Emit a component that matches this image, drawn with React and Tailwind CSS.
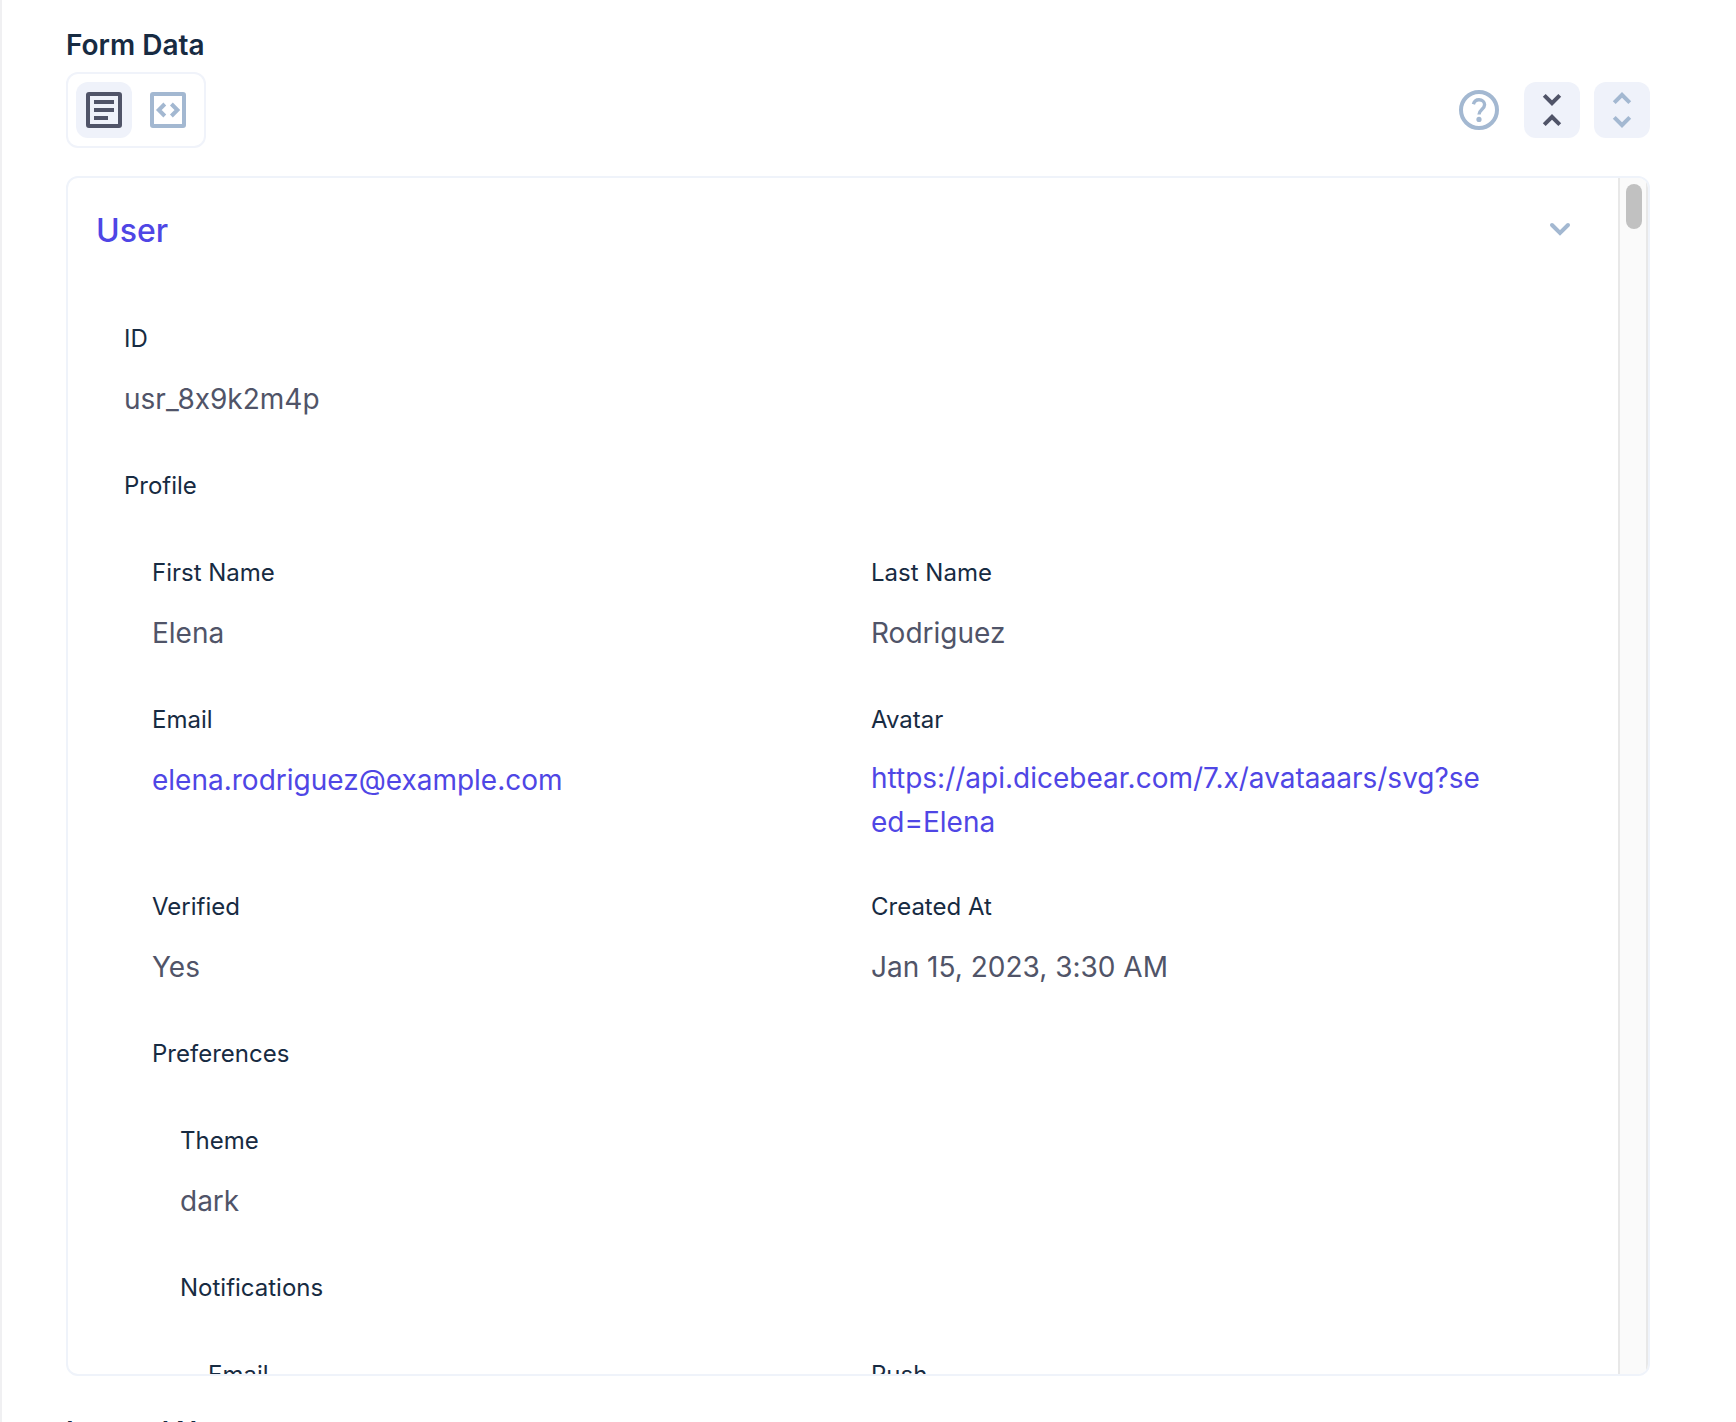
import React from "react";

const ICON = "size-12 shrink-0";

function ArticleIcon() {
  return (
    <svg viewBox="0 0 24 24" className={ICON} fill="none" stroke="currentColor" strokeWidth="2" aria-hidden="true">
      <rect x="4" y="4" width="16" height="16" rx="0.5" />
      <path d="M7 8h10M7 12h10M7 16h7" />
    </svg>
  );
}

function CodeIcon() {
  return (
    <svg viewBox="0 0 24 24" className={ICON} fill="none" stroke="currentColor" strokeWidth="2" aria-hidden="true">
      <rect x="4" y="4" width="16" height="16" rx="0.5" />
      <path d="m10.4 9-3 3 3 3M13.7 9l3 3-3 3" />
    </svg>
  );
}

function HelpIcon() {
  return (
    <svg viewBox="0 0 24 24" className={ICON} fill="none" stroke="currentColor" strokeWidth="2" aria-hidden="true">
      <circle cx="12" cy="12" r="9" />
      <path strokeWidth="1.7" d="M9.2 9.1C9.6 7.7 10.6 6.9 12 6.9c1.6 0 2.8 1 2.8 2.5 0 1.1-.7 1.8-1.5 2.5-.9.8-1.3 1.3-1.3 2.4" />
      <circle cx="12" cy="16.7" r="1.3" fill="currentColor" stroke="none" />
    </svg>
  );
}

function CollapseIcon() {
  return (
    <svg viewBox="0 0 24 24" className={ICON} fill="currentColor" aria-hidden="true">
      <path d="M7.41 18.59 8.83 20 12 16.83 15.17 20l1.41-1.41L12 14l-4.59 4.59zm9.18-13.18L15.17 4 12 7.17 8.83 4 7.41 5.41 12 10l4.59-4.59z" />
    </svg>
  );
}

function ExpandIcon() {
  return (
    <svg viewBox="0 0 24 24" className={ICON} fill="currentColor" aria-hidden="true">
      <path d="M12 5.83 15.17 9l1.41-1.41L12 3 7.41 7.59 8.83 9 12 5.83zm0 12.34L8.83 15l-1.41 1.41L12 21l4.59-4.59L15.17 15 12 18.17z" />
    </svg>
  );
}

function ChevronIcon() {
  return (
    <svg viewBox="0 0 24 24" className={ICON} fill="none" stroke="currentColor" strokeWidth="2" strokeLinecap="round" aria-hidden="true">
      <path d="m8 9 4 4 4-4" />
    </svg>
  );
}

function Field({ label, children }) {
  return (
    <div className="min-w-0">
      <dt className="text-2xl leading-8 text-[#172b42]">{label}</dt>
      <dd className="mt-5 pr-12 text-[28px] leading-[48px] text-[#505468]">{children}</dd>
    </div>
  );
}

function Group({ label, children }) {
  return (
    <div>
      <h3 className="text-2xl leading-8 text-[#172b42]">{label}</h3>
      <div className="flex flex-col gap-[47px] px-7 pt-[55px]">{children}</div>
    </div>
  );
}

function Columns({ children }) {
  return <dl className="grid grid-cols-2 gap-x-14 gap-y-[47px]">{children}</dl>;
}

export default function App() {
  return (
    <main className="h-screen overflow-hidden border-l-2 border-[#f0f0f2] bg-white pr-[86px] pl-16 font-['Inter','Open_Sans',sans-serif] [font-feature-settings:'calt'_0]">
      <section className="pt-[25px]">
        <h1 className="text-[28px] leading-10 font-semibold text-[#172b42]">Form Data</h1>
        <div className="mt-[7px] flex items-center justify-between">
          <div className="flex gap-2 rounded-xl border-2 border-[#f0f3fa] p-2">
            <button type="button" aria-label="Form view" aria-pressed="true" className="rounded-xl bg-[#eff2fa] p-1 text-[#505468]">
              <ArticleIcon />
            </button>
            <button type="button" aria-label="Code view" aria-pressed="false" className="rounded-xl p-1 text-[#a3b8d1]">
              <CodeIcon />
            </button>
          </div>
          <div className="flex items-center gap-3.5">
            <button type="button" aria-label="Help" className="mr-[7px] text-[#a3b8d1]">
              <HelpIcon />
            </button>
            <button type="button" aria-label="Collapse all" className="rounded-xl bg-[#eff2fa] p-1 text-[#505468]">
              <CollapseIcon />
            </button>
            <button type="button" aria-label="Expand all" className="rounded-xl bg-[#eff2fa] p-1 text-[#a3b8d1]">
              <ExpandIcon />
            </button>
          </div>
        </div>

        <div className="mt-7 flex h-[1200px] overflow-hidden rounded-xl border-2 border-[#eff3fa]">
          <div className="min-w-0 flex-1 overflow-hidden px-7 pt-7">
            <button type="button" aria-expanded="true" className="flex w-full items-center justify-between pr-1.5">
              <span className="text-[32px] leading-[50px] font-medium text-[#4f46e5]">User</span>
              <span className="text-[#a3b8d1]">
                <ChevronIcon />
              </span>
            </button>
            <div className="flex flex-col gap-[47px] px-7 pt-[67px]">
              <dl>
                <Field label="ID">usr_8x9k2m4p</Field>
              </dl>
              <Group label="Profile">
                <Columns>
                  <Field label="First Name">Elena</Field>
                  <Field label="Last Name">Rodriguez</Field>
                  <Field label="Email">
                    <a href="mailto:elena.rodriguez@example.com" className="text-[#4f46e5]">
                      elena.rodriguez@example.com
                    </a>
                  </Field>
                  <Field label="Avatar">
                    <a href="https://api.dicebear.com/7.x/avataaars/svg?seed=Elena" className="block leading-[44px] break-all text-[#4f46e5]">
                      https://api.dicebear.com/7.x/avataaars/svg?seed=Elena
                    </a>
                  </Field>
                  <Field label="Verified">Yes</Field>
                  <Field label="Created At">Jan 15, 2023, 3:30 AM</Field>
                </Columns>
                <Group label="Preferences">
                  <dl>
                    <Field label="Theme">dark</Field>
                  </dl>
                  <Group label="Notifications">
                    <Columns>
                      <Field label="Email">Yes</Field>
                      <Field label="Push">Yes</Field>
                    </Columns>
                  </Group>
                </Group>
              </Group>
            </div>
          </div>
          <div className="w-[30px] shrink-0 border-x-2 border-[#e8e8e8] bg-[#fafafa] px-1.5 pt-1.5" aria-hidden="true">
            <div className="h-[45px] w-4 rounded-full bg-[#c1c1c1]" />
          </div>
        </div>
      </section>

      <section className="pt-9">
        <h2 className="text-[28px] leading-10 font-semibold text-[#172b42]">Internal Notes</h2>
      </section>
    </main>
  );
}
